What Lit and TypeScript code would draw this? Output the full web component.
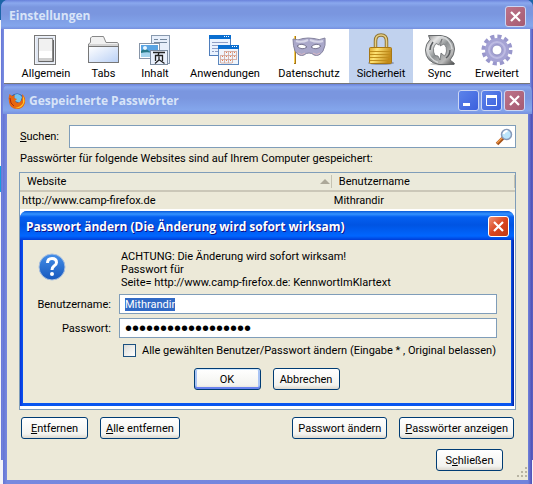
import { LitElement, html, css, svg } from "lit";
import { customElement, query } from "lit/decorators.js";
import { classMap } from "lit/directives/class-map.js";

const general = svg`
  <rect x="4.500" y="1.500" width="21" height="29" fill="#eef1f7" stroke="#777"/>
  <rect x="6" y="3" width="18" height="26" fill="#dfe6f2"/>
  <rect x="8.500" y="4.500" width="14" height="23" fill="#f1f1f1" stroke="#8b8b8b"/>
  <rect x="9" y="17" width="13" height="7" fill="#fff"/>
  <rect x="9" y="24" width="13" height="3" fill="#cfcfcf"/>
  <path d="M9 27.500H23.500V6" fill="none" stroke="#666"/>`;

const tabs = svg`
  <defs><linearGradient id="tb" x2="1" y2="1"><stop offset="0" stop-color="#fff"/><stop offset="1" stop-color="#b9d0f5"/></linearGradient></defs>
  <path d="M2.500 8.500V4L4 2.500H15.500L18 8.500H29.500L30.500 10V14H.500V10Z" fill="#f1f1f1" stroke="#888"/>
  <rect x="1" y="10" width="29" height="3" fill="#d4d4d4"/>
  <rect x=".500" y="12.500" width="30" height="16" fill="url(#tb)" stroke="#777"/>`;

const content = svg`
  <rect x="12.500" y="1.500" width="18" height="28" fill="#e7effb" stroke="#8899ae"/>
  <path d="M21 5.500h7M15 5.500h4M15 8.500h13" stroke="#73879d"/>
  <rect x=".500" y="9.500" width="20" height="15" fill="#fff" stroke="#8795a8"/>
  <rect x="2" y="11" width="17" height="12" fill="#5aa4e2"/>
  <path d="M2 17q4-4 8 0t9 1v5H2z" fill="#277a88"/><path d="M2 19q7-2 17 1v3H2z" fill="#a4d5ee"/>
  <circle cx="6" cy="14" r="2" fill="#e7f6ff"/>
  <rect x="11.500" y="16.500" width="17" height="14" fill="#eaf1fd" stroke="#7d8ca0"/>
  <path d="M14 18.500h12M20 18.500l-1 3M16.500 27v-5.500h7V27M20 22.500v3.500l-4 3.500M20.500 26l5 3.500" fill="none" stroke="#222" stroke-width="1.300"/>`;

const applications = svg`
  <rect x=".500" y="1.500" width="21" height="20" fill="#eaf3ff" stroke="#4f7dbb"/>
  <rect y="1" width="22" height="4" fill="#096ed0"/><path d="M15 2.500h1m1 0h1m1 0h1" stroke="#fff"/>
  <path d="M3 8.500h16M3 11.500h12M3 14.500h7M3 17.500h2M6 17.500h4" stroke="#8f9fc5"/>
  <rect x="9.500" y="11.500" width="20" height="19" fill="#f0f5fc" stroke="#5d88be"/>
  <rect x="9" y="11" width="21" height="4" fill="#096ed0"/><path d="M23 12.500h1m1 0h1m1 0h1" stroke="#fff"/>
  <path d="M15 17.500h12M12 21.500h15M12 25.500h15M12 29h11M11.500 21v8M15.500 17v12M19.500 17v12M23.500 17v12M27.500 17v9" stroke="#cfa294" stroke-width=".8"/>
  <path d="M17 18.500h1m3 0h1m3 0h1M13 22.500h1m3 0h1m3 0h1m3 0h1M13 26.500h1m3 0h1m3 0h1" stroke="#ed7b48"/>`;

const privacy = svg`
  <path d="M2 2v28" stroke="#a97818" stroke-width="2"/><path d="M1.500 2v27" stroke="#f5cf54"/>
  <path d="M0 5q5 2 10-.500 5-1 11 0 5 2.500 11-.500 1 8-2 13-4 6-9 4-2-2-5-2t-5 2q-5 2-9-4Q0 12 0 5Z" fill="#aaa8ca" stroke="#86849f"/>
  <path d="M3 7q6 2 12-1M17 6q7 3 13 1" fill="none" stroke="#d7d6e8" stroke-width="2"/>
  <path d="M4 12q5-4 10 1-5 4-10-1ZM18 13q5-5 10-1-5 5-10 1Z" fill="#fff" stroke="#77758f"/>
  <path d="M5 19q4 3 7 0M20 19q4 3 7 0" fill="none" stroke="#d8b7c3"/>`;

const lock = svg`
  <defs><linearGradient id="lk" x2="1" y2=".3"><stop offset="0" stop-color="#dca72e"/><stop offset=".35" stop-color="#ffe474"/><stop offset="1" stop-color="#c38a18"/></linearGradient></defs>
  <ellipse cx="16" cy="29" rx="13" ry="2" fill="#8c9ab8"/>
  <path d="M10.500 16V7q0-6 5.500-6t5.500 6v9" fill="none" stroke="#8f7433" stroke-width="3.500"/>
  <path d="M10.500 16V7q0-6 5.500-6t5.500 6v9" fill="none" stroke="#e6cf85" stroke-width="1.500"/>
  <rect x="4.500" y="13.500" width="22" height="16" rx="1" fill="url(#lk)" stroke="#a77714"/>
  <path d="M5 17.500h21M5 20.500h21M5 23.500h21M5 26.500h21" stroke="#c08e1c"/>`;

const sync = svg`
  <defs><linearGradient id="sy" x2="1" y2="1"><stop offset="0" stop-color="#777"/><stop offset=".25" stop-color="#e6e6e6"/><stop offset=".5" stop-color="#8d9193"/><stop offset=".75" stop-color="#bbb"/><stop offset="1" stop-color="#444"/></linearGradient></defs>
  <ellipse cx="18" cy="30" rx="12" ry="1.500" fill="#ccc"/>
  <path d="M4.500 1.500H17Q30 3 30.500 15 30.500 21 26 26L30.500 29.500 30 30.500H15Q1.500 28 1.500 16 1.500 10 6 5.500Z" fill="url(#sy)" stroke="#686b6d"/>
  <path d="M18 5L16 12 20 10Q23 13 22.500 17 22 20 20.500 22L17 19 16 26 14 22 11 21.500Q9 18 9.500 14.500 10 12 12 9.500L15 11Z" fill="#fff" stroke="#606365" stroke-width=".7"/>
  <path d="M17 2.500Q27 5 28 15M14 28.500Q5 25 3.500 16" fill="none" stroke="#d5d7d8" stroke-width="1.500"/>
  <path d="M22 24q4-3 4-8M9 8q-3 4-3 8" fill="none" stroke="#5a5d60" stroke-width="1.500"/>`;

const gear = svg`
  <circle cx="16" cy="16" r="13" fill="none" stroke="#9997cc" stroke-width="5" stroke-dasharray="3.900 2.907"/>
  <circle cx="16" cy="16" r="8.500" fill="none" stroke="#a5a3d4" stroke-width="7"/>
  <circle cx="16" cy="16" r="8" fill="none" stroke="#bdbbe2" stroke-width="2"/>
  <circle cx="16" cy="16" r="5" fill="#fff" stroke="#8c8abf"/>`;

const cross = html`<svg viewBox="0 0 21 21"><path d="M6 6l9 9M15 6l-9 9" stroke="#fff" stroke-width="2.200"/></svg>`;

const categories = [
  { label: "Allgemein", icon: general },
  { label: "Tabs", icon: tabs },
  { label: "Inhalt", icon: content },
  { label: "Anwendungen", icon: applications },
  { label: "Datenschutz", icon: privacy },
  { label: "Sicherheit", icon: lock, active: true },
  { label: "Sync", icon: sync },
  { label: "Erweitert", icon: gear },
];

@customElement("app-root")
export class AppRoot extends LitElement {
  @query("#user") user!: HTMLInputElement;

  static styles = css`
    :host {
      display: grid;
      grid-template-columns: minmax(0, 1fr);
      font: 11px/13px Roboto, sans-serif;
      color: #000;
      background: linear-gradient(#1c65a8 0 20px, #f8f8fb 20px 166px, #159be0 166px 192px, #f4f4f8 192px);
    }
    * { box-sizing: border-box; }
    button, input { font: inherit; color: inherit; margin: 0; }
    svg { display: block; }
    .window { grid-area: 1 / 1; border-radius: 7px 7px 0 0; }
    .settings {
      margin: 0 0 24px 1px;
      padding: 0 3px;
      background: linear-gradient(90deg, #6676d6, #7b8fe2 3px, #7b8fe2 calc(100% - 3px), #5355b9);
    }
    .passwords {
      margin: 84px 1px 0 3px;
      padding: 0 4px 4px;
      background: linear-gradient(90deg, #6575d4, #7789df 4px, #7083dc calc(100% - 4px), #4f4fb5);
    }
    .title {
      display: flex;
      align-items: center;
      height: 30px;
      gap: 2px;
      color: #d8e4f8;
      font: bold 12px/18px "Open Sans", sans-serif;
      background: linear-gradient(#6a82db 0, #8aa8ee 3px, #7a96df 7px, #7a96df 14px, #84a6ec 26px, #7690df);
    }
    .title h1, .title h2 { flex: 1; margin: 0; font: inherit; white-space: nowrap; }
    .settings > .title { height: 29px; margin: 0 -3px; padding: 3px 7px 0 8px; border-radius: 7px 7px 0 0; }
    .passwords > .title { margin: 0 -4px; padding: 3px 7px 0 5px; border-radius: 7px 7px 0 0; }
    .fox { width: 18px; height: 18px; margin-right: 1px; }
    .ctl {
      width: 21px;
      height: 21px;
      padding: 0;
      border: 1px solid #cbd6f5;
      border-radius: 3px;
      background: linear-gradient(135deg, #5c83ea, #3c60dd);
    }
    .ctl svg { margin: -1px; width: 21px; height: 21px; }
    .ctl.close { background: linear-gradient(135deg, #bd7389, #a55b72); }
    .tools {
      display: grid;
      grid-template-columns: 64fr 51fr 52fr 88fr 80fr 64fr 53fr 62fr;
      padding: 0 2px 0 10px;
      height: 55px;
      background: #fff;
      border-bottom: 1px solid #777;
    }
    .tool {
      display: flex;
      flex-direction: column;
      align-items: center;
      gap: 1px;
      padding: 5px 0 0;
      border: 0;
      background: none;
      white-space: nowrap;
    }
    .tool svg { width: 32px; height: 32px; overflow: visible; }
    .tool.active { background: #c1d2ee; }
    .body { padding: 11px 12px 9px; background: #ece9d8; position: relative; }
    .search { display: flex; align-items: center; gap: 7px; padding-left: 1px; }
    .search label { width: 42px; white-space: nowrap; }
    .box { display: flex; align-items: center; flex: 1; height: 23px; padding-right: 2px; border: 1px solid #7f9db9; background: #fff; }
    .box input { flex: 1; min-width: 0; border: 0; outline: 0; background: none; }
    .box svg { width: 18px; height: 18px; }
    .hint { margin: 4px 1px 7px; }
    .tree { border: 1px solid #7f9db9; background: #fff; padding-bottom: 3px; }
    table { width: 100%; table-layout: fixed; border-collapse: collapse; background: #ece9d8; }
    .site { width: 63%; }
    th { height: 18px; padding: 0 6px 0 7px; text-align: left; font-weight: normal; border-bottom: 2px solid #cbc7b8; background: #ebeadb; }
    .head { display: flex; align-items: center; justify-content: space-between; border-right: 1px solid #c5c2b2; margin-right: -6px; }
    .site .head { padding-right: 1px; }
    .head svg { width: 10px; height: 5px; }
    td { height: 18px; padding: 0 2px; }
    .dialog { margin: 2px 1px 0 0; padding: 0 3px 3px; border-radius: 7px 7px 0 0; background: linear-gradient(90deg, #0831d9, #0855f0 3px, #0855f0 calc(100% - 3px), #001ea0); }
    .dialog .title {
      height: 29px;
      margin: 0 -3px;
      padding: 2px 5px 0 6px;
      border-radius: 7px 7px 0 0;
      color: #fff;
      text-shadow: 1px 1px #0f1089;
      background: linear-gradient(#0859d8 0, #3593ff 3px, #0560f0 6px, #0054e3 14px, #0066ff 25px, #003dd7);
    }
    .dialog .close { border-color: #fff; background: linear-gradient(135deg, #f09376, #d9451f 50%, #c33a13); }
    .panel { padding: 10px 14px 13px 13px; background: #ece9d8; }
    .message { display: flex; gap: 55px; margin-bottom: 5px; }
    .message svg { width: 28px; height: 28px; margin: 3px 0 0 2px; flex: none; }
    .message p { margin: 0; }
    .fields { display: grid; grid-template-columns: 75px 1fr; gap: 4px 8px; align-items: center; }
    .fields label { text-align: right; white-space: nowrap; }
    .fields input { height: 20px; min-width: 0; padding: 0 5px; border: 1px solid #7f9db9; outline: 0; background: #fff; caret-color: transparent; }
    .fields input::selection { color: #fff; background: #316ac5; }
    .fields .secret { font: 20px/18px "Liberation Sans", sans-serif; }
    .check { display: flex; align-items: center; gap: 6px; margin: 6px 0 11px 87px; white-space: nowrap; }
    .check input { appearance: none; width: 13px; height: 13px; border: 1px solid #1c5180; background: linear-gradient(135deg, #dcdcd7, #fff); }
    .row { display: flex; justify-content: center; gap: 12px; }
    .btn {
      min-width: 67px;
      height: 22px;
      padding: 0 5px;
      border: 1px solid #003c74;
      border-radius: 3px;
      background: linear-gradient(#fff, #f3f3ef 80%, #dcd8cf);
      white-space: nowrap;
    }
    .btn.ok { box-shadow: inset 0 1px #cee7ff, inset 0 -2px #6982ee, inset 2px 0 #a9c4f5, inset -2px 0 #a9c4f5; }
    .actions { justify-content: flex-start; margin: 7px 2px 0; }
    .spacer { flex: 1; }
    .actions .spacer { margin: 0 -12px; }
    .finish { justify-content: flex-end; margin: 10px 13px 0; }
    .grip { position: absolute; right: 0; bottom: 1px; width: 12px; height: 12px; }
  `;

  firstUpdated() {
    this.user.focus();
    this.user.select();
  }

  render() {
    return html`
      <section class="window settings">
        <header class="title"><h1>Einstellungen</h1><button class="ctl close" aria-label="Schließen">${cross}</button></header>
        <nav class="tools">
          ${categories.map((c) => html`
            <button class=${classMap({ tool: true, active: !!c.active })}>
              <svg viewBox="0 0 32 32">${c.icon}</svg>${c.label}
            </button>`)}
        </nav>
      </section>
      <section class="window passwords">
        <header class="title">
          <svg class="fox" viewBox="0 0 18 18">
            <circle cx="9" cy="9" r="7.500" fill="#285ca8"/><path d="M6 3q5-3 8 2l-2 6-5-2Z" fill="#73c3ee"/>
            <path d="M1.500 2l2.500 2 3-1-1 3 3 1-2 2q2 3 5 1 3-2 2-8 4 3 3 9-2 6-8 6-7 0-8-7Q0 6 1.500 2Z" fill="#e76711"/>
            <path d="M15 4q3 5 0 9-3 4-8 3 6-1 8-5Z" fill="#ffc72b"/><path d="M2 6q0 6 4 8" fill="none" stroke="#a92e0c"/>
          </svg>
          <h2>Gespeicherte Passwörter</h2>
          <button class="ctl" aria-label="Minimieren"><svg viewBox="0 0 21 21"><path d="M5 14.500h7" stroke="#fff" stroke-width="3"/></svg></button>
          <button class="ctl" aria-label="Maximieren"><svg viewBox="0 0 21 21"><path d="M5.500 6v9.500h10V6" fill="none" stroke="#fff"/><path d="M5 6.500h11" stroke="#fff" stroke-width="3"/></svg></button>
          <button class="ctl close" aria-label="Schließen">${cross}</button>
        </header>
        <div class="body">
          <div class="search">
            <label for="find"><u>S</u>uchen:</label>
            <div class="box"><input id="find" type="text" />
              <svg viewBox="0 0 18 18"><path d="M2 16l6-6" stroke="#a65318" stroke-width="3.500"/><path d="M2 15l6-6" stroke="#f19a4b" stroke-width="1.500"/><circle cx="11.500" cy="6.500" r="5" fill="#bce5fb" stroke="#8799b8" stroke-width="1.500"/><path d="M8.500 6q1-3 4-3" stroke="#fff" stroke-width="2" fill="none"/></svg>
            </div>
          </div>
          <p class="hint">Passwörter für folgende Websites sind auf Ihrem Computer gespeichert:</p>
          <div class="tree">
            <table>
              <thead><tr>
                <th class="site"><div class="head">Website<svg viewBox="0 0 10 5"><path d="M5 0l5 5H0Z" fill="#aca899"/></svg></div></th>
                <th><div class="head">Benutzername</div></th>
              </tr></thead>
              <tbody><tr><td>http://www.camp-firefox.de</td><td>Mithrandir</td></tr></tbody>
            </table>
            <div class="dialog" role="dialog" aria-labelledby="dt">
              <header class="title"><h2 id="dt">Passwort ändern (Die Änderung wird sofort wirksam)</h2><button class="ctl close" aria-label="Schließen">${cross}</button></header>
              <div class="panel">
                <div class="message">
                  <svg viewBox="0 0 28 28"><defs><linearGradient id="q" x2="0" y2="1"><stop offset="0" stop-color="#458fe8"/><stop offset="1" stop-color="#1658bd"/></linearGradient></defs><circle cx="14" cy="14" r="13" fill="url(#q)" stroke="#a8bfdf"/><path d="M9.500 10q0-4.500 4.500-4.500t4.500 4q0 2-2.500 3.500-2 1.500-2 4" fill="none" stroke="#fff" stroke-width="3"/><circle cx="14" cy="21" r="2" fill="#fff"/></svg>
                  <p>ACHTUNG: Die Änderung wird sofort wirksam!<br />Passwort für<br />Seite= http://www.camp-firefox.de: KennwortImKlartext</p>
                </div>
                <div class="fields">
                  <label for="user">Benutzername:</label><input id="user" type="text" value="Mithrandir" />
                  <label for="pass">Passwort:</label><input id="pass" class="secret" type="password" value="KennwortImKlartext" />
                </div>
                <label class="check"><input type="checkbox" />Alle gewählten Benutzer/Passwort ändern (Eingabe * , Original belassen)</label>
                <div class="row"><button class="btn ok">OK</button><button class="btn">Abbrechen</button></div>
              </div>
            </div>
          </div>
          <div class="row actions">
            <button class="btn"><u>E</u>ntfernen</button><button class="btn"><u>A</u>lle entfernen</button>
            <span class="spacer"></span>
            <button class="btn">Passwort ändern</button><button class="btn"><u>P</u>asswörter anzeigen</button>
          </div>
          <div class="row finish"><button class="btn">S<u>c</u>hließen</button></div>
          <svg class="grip" viewBox="0 0 12 12"><path d="M9 1h2M9 5h2M9 9h2M5 5h2M5 9h2M1 9h2" stroke="#b8b4a2" stroke-width="2"/></svg>
        </div>
      </section>`;
  }
}
